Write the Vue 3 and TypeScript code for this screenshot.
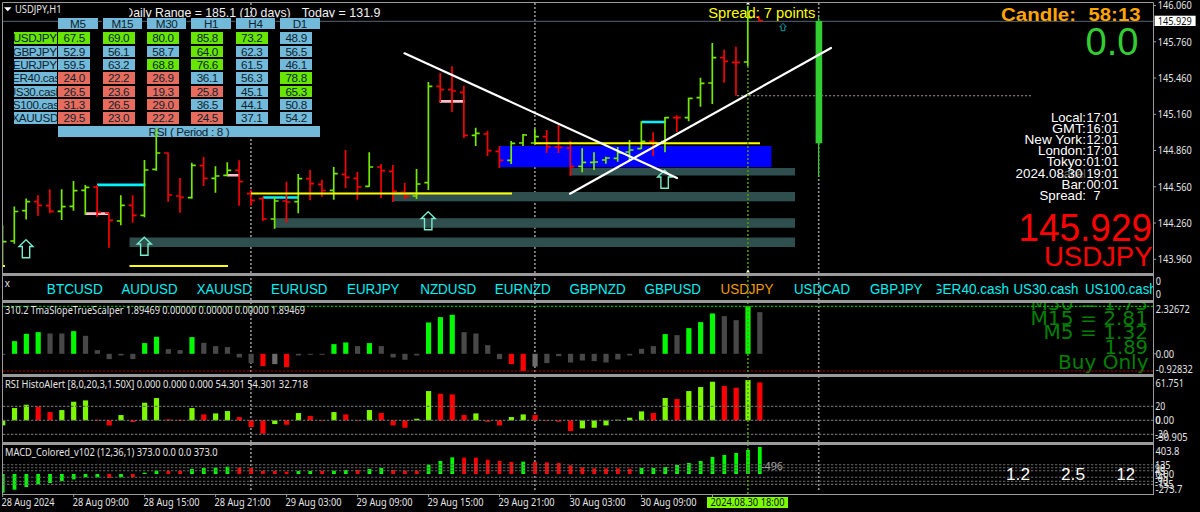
<script setup lang="ts">
type Bar = [open: number, high: number, low: number, close: number, dir: 'u' | 'd']
type Label = [text: string, x: number, baseline: number, width: number]

const slot = (i: number): number => 2.7 + 11.83 * i

const ohlc: Bar[] = [
  [241.7, 225, 266.5, 241.7, 'u'], [241, 206.5, 243.7, 211.5, 'u'], [210.7, 198.5, 219.5, 201.7, 'u'], [201.7, 195.3, 215.7, 205.3, 'd'],
  [205.7, 189.3, 213.3, 211.3, 'd'], [211.3, 189.3, 220, 206.7, 'u'], [206.3, 181, 210.7, 190.7, 'u'], [190.3, 185, 215, 187.3, 'u'],
  [187, 185, 216.7, 212.3, 'd'], [213, 213, 247.7, 220.3, 'd'], [221, 195.3, 225.3, 205.3, 'u'], [205.3, 195.3, 222.7, 215.3, 'd'],
  [215.3, 160, 217.3, 170, 'u'], [169.3, 129, 170.7, 153, 'u'], [153, 152.5, 201.7, 195, 'd'], [196, 178, 212.7, 197.3, 'd'],
  [197.7, 162.7, 198.7, 165.3, 'u'], [165.7, 157, 186, 178.3, 'd'], [178.3, 166.3, 192.7, 176, 'u'], [175.3, 162.3, 176, 170.3, 'u'],
  [170.3, 160.3, 205.7, 181.7, 'd'], [193.7, 189.7, 205.7, 200.3, 'd'], [198.7, 196.7, 221, 219, 'd'], [219, 197.3, 228.7, 201, 'u'],
  [201, 181.7, 222.7, 202, 'd'], [201.7, 174, 213.3, 178.7, 'u'], [178.7, 170, 200.3, 183.7, 'd'], [184.3, 179.7, 196.7, 190.5, 'd'],
  [190.3, 167, 199.7, 173.7, 'u'], [174.3, 150, 188, 177.3, 'd'], [178.3, 172, 199.7, 187, 'd'], [186.3, 152.3, 186.7, 167, 'u'],
  [167, 164, 198, 170.7, 'd'], [171.3, 165, 202, 191.3, 'd'], [192.3, 183, 199, 196.3, 'd'], [196, 169, 199, 184, 'u'],
  [182.7, 82, 190, 86.3, 'u'], [86.3, 73, 102, 89.7, 'd'], [89.7, 66.3, 112, 91, 'd'], [92.3, 85.7, 138, 135.3, 'd'],
  [135.3, 127.7, 146, 133.3, 'u'], [134, 130.7, 156, 150.7, 'd'], [151.3, 146, 168, 160.3, 'd'], [160.3, 141, 164, 143.3, 'u'],
  [143, 134, 146, 135, 'u'], [143, 129, 144, 136.7, 'u'], [136.7, 130, 153, 146.7, 'd'], [147, 124, 153, 147.3, 'd'],
  [148, 140.7, 176, 166.7, 'd'], [166.3, 148.3, 172.3, 162.3, 'u'], [162.3, 152.3, 170, 162, 'u'], [160, 156.7, 163.7, 158, 'u'],
  [158.3, 147, 161.7, 152.7, 'u'], [152, 140, 160, 150, 'u'], [148.7, 121.3, 149, 141.3, 'u'], [141.3, 132.3, 156, 142.3, 'd'],
  [141.7, 117, 152.3, 117.7, 'u'], [117.7, 115.3, 132, 117.7, 'd'], [117.7, 97.7, 121.3, 98.3, 'u'], [97.7, 77.7, 106.7, 83.3, 'u'],
  [83, 43, 104, 57.7, 'u'], [57.7, 49.7, 82.7, 61.3, 'd'], [62.3, 46.7, 95.7, 62.3, 'd'], [62, 6, 66, 17.7, 'u'],
]

const barPath = (b: Bar, i: number): string => {
  const x = slot(i) - 0.2
  const left = i === 0 ? '' : `M${x - 4} ${b[0]}H${x}`
  return `M${x} ${b[1]}V${b[2]}${left}M${x} ${b[3]}H${x + 4}`
}

interface HistoBar { x: number; y: number; w: number; h: number; c: string }
const histogram = (rows: string, zero: number, width: number): HistoBar[] =>
  rows.trim().split(/\s+/).map((item, i) => {
    const c = item.slice(-1)
    const d = Number(item.slice(0, -1)) / 3
    // The first bar is cut by the left frame.
    const x = Math.max(2, slot(i) - width / 2)
    return { x, y: d > 0 ? zero - d : zero, w: slot(i) + width / 2 - x, h: Math.abs(d), c: 'f-' + c }
  })

// Values are thirds of a pixel above (+) or below (-) the zero line.
const slopeBars = histogram(`
  -4s 38g 60g 65g 61s 61s 68g 54s 11s -16s -5s -16s 32g 51g 14s 11s 50g 33s 23s 20s -11s -28s -37r -31m -40r
  -5s -3s -3s 29g 34g 23s 32g 23s -11s -18s -5s 94g 110g 117g 65s 61s 26s -16s -31r -52r -38m -28s -7s -26s -20s
  -22s -26s -17s -5s 15s 23s 59g 56s 77g 95g 121g 113s 101s 143g 125s`, 353.8, 5.2)

const rsiBars = histogram(`
  -15c 37c 47c 41r 25r 31c 56c 60c 2r -15r 16c -5r 53c 67c 3r 2r 37c 18r 21c 28c 10r -20r -40r -11c -13r
  22c 13r -2r 25c 18r -2r 31c 22r -15r -22r 5c 88c 80r 78r 16r 21c -4r -15r 10c 18c 16r -2r -4r -32r -24c
  -22c -15c 2c 8c 27c 22r 67c 64r 88c 100c 116c 103r 98r 121c 114r`, 420.4, 5.2)

const macdBars = histogram(`
  -56g -47g -39g -31g -27g -21g -16g -10g -10g -12r -10g -10r 4g 10g 9r 9r 15g 18g 19g 22g 19r 18r 9r 9r 7r
  9g 9g 9r 10g 12g 12r 15g 18g 12r 10r 10r 28g 39g 50g 49r 49r 43r 39r 36r 37g 36r 35r 33r 26r 20r
  17r 17r 17r 15r 18g 18g 21g 27g 33g 39g 51g 57g 63g 72g 81g`, 474, 3.8)

const separators: number[] = [250.9, 534.9, 818.7]
const arrows: [number, number][] = [[26, 239], [144.3, 236.5], [428.2, 211], [664.6, 169.5]]

const priceAxis: [string, number][] = [
  ['146.060', 5.5], ['145.760', 41.8], ['145.460', 78], ['145.160', 114.3],
  ['144.860', 150.5], ['144.560', 186.8], ['144.260', 223], ['143.960', 259.3],
]

const clocks: Label[] = [
  ['Local:', 1051, 122, 35], ['GMT:', 1052, 133.1, 34], ['New York:', 1024.5, 144.2, 61.5], ['London:', 1038, 155.3, 48],
  ['Tokyo:', 1046.5, 166.4, 39.5], ['2024.08.30', 1015.5, 177.5, 67], ['Bar:', 1061.5, 188.5, 24.5], ['Spread:', 1039.5, 199.6, 46.5],
]
const clockValues: Label[] = [
  ['17:01', 1086.5, 122, 32], ['16:01', 1086.5, 133.1, 32], ['12:01', 1086.5, 144.2, 32], ['17:01', 1086.5, 155.3, 32],
  ['01:01', 1086.5, 166.4, 32], ['19:01', 1086.5, 177.5, 32], ['00:01', 1086.5, 188.5, 32], ['7', 1093.5, 199.6, 7],
]

const symbols: Label[] = [
  ['BTCUSD', 46.8, 293.8, 56], ['AUDUSD', 121.5, 293.8, 56], ['XAUUSD', 196.7, 293.8, 55], ['EURUSD', 271, 293.8, 56.5],
  ['EURJPY', 347, 293.8, 52.5], ['NZDUSD', 420.2, 293.8, 56], ['EURNZD', 494.8, 293.8, 56], ['GBPNZD', 569.6, 293.8, 56],
  ['GBPUSD', 644.6, 293.8, 56.4], ['USDJPY', 720.5, 293.8, 53], ['USDCAD', 794, 293.8, 56], ['GBPJPY', 870, 293.8, 52.5],
  ['US30.cash', 1013.5, 293.8, 65], ['US100.cash', 1085, 293.8, 71.5],
]

const slopeNotes: Label[] = [
  ['M30 = 1.73', 1030.5, 310.2, 117.5], ['M15 = 2.81', 1030.5, 324.8, 117.5], ['M5 = 1.32', 1043.5, 339.3, 104.5],
  ['1.89', 1104.5, 354.2, 43.5], ['Buy Only', 1058, 369, 90.5],
]

const rsiAxis: Label[] = [
  ['61.751', 1155.5, 386.8, 28.5], ['20', 1155.3, 410.4, 10], ['0', 1155.3, 424.2, 5.2], ['0.00', 1155.5, 424.2, 18.5],
  ['-20', 1155, 438.2, 13], ['-30.905', 1155.5, 440.6, 32],
]
const macdLevels: number[] = [464.7, 467.7, 470.8, 477.3, 481.3, 484.4]
const macdAxis: Label[] = [
  ['403.8', 1155.5, 454.8, 24], ['135', 1155, 468.6, 15.5], ['90', 1155, 471.7, 10], ['45', 1155, 474.8, 10], ['0.00', 1155.5, 478.4, 18.5],
  ['-45', 1155, 481, 13], ['-90', 1155, 484.6, 13], ['-135', 1155, 488, 18.5], ['-273.7', 1155.5, 492.8, 27],
]

const times: Label[] = [
  ['28 Aug 2024', 1.5, 506.4, 53], ['28 Aug 09:00', 72.7, 506.4, 56], ['28 Aug 15:00', 143.6, 506.4, 56], ['28 Aug 21:00', 214.6, 506.4, 56],
  ['29 Aug 03:00', 285.6, 506.4, 56], ['29 Aug 09:00', 356.6, 506.4, 56], ['29 Aug 15:00', 427.5, 506.4, 56], ['29 Aug 21:00', 498.5, 506.4, 56],
  ['30 Aug 03:00', 569.5, 506.4, 56], ['30 Aug 09:00', 640.5, 506.4, 56],
]

const frames: string[] = ['M5', 'M15', 'M30', 'H1', 'H4', 'D1']
const rsiTable: { name: string; values: string[] }[] = [
  { name: 'USDJPY', values: ['67.5', '69.0', '80.0', '85.8', '73.2', '48.9'] },
  { name: 'GBPJPY', values: ['52.9', '56.1', '58.7', '64.0', '62.3', '56.5'] },
  { name: 'EURJPY', values: ['59.5', '63.2', '68.8', '76.6', '61.5', '46.1'] },
  { name: 'GER40.cash', values: ['24.0', '22.2', '26.9', '36.1', '56.3', '78.8'] },
  { name: 'US30.cash', values: ['26.5', '23.6', '19.3', '25.8', '45.1', '65.3'] },
  { name: 'US100.cash', values: ['31.3', '26.5', '29.0', '36.5', '44.1', '50.8'] },
  { name: 'XAUUSD', values: ['29.5', '23.0', '22.2', '24.5', '37.1', '54.2'] },
]
const highs = new Set(['67.5', '69.0', '80.0', '85.8', '73.2', '64.0', '68.8', '76.6', '78.8', '65.3'])
const tone = (v: string): string => (highs.has(v) ? 'hi' : Number(v) < 35 ? 'lo' : '')
</script>

<template>
  <div class="terminal">
    <section class="price">
      <div class="rsi-table">
        <div class="row head">
          <span class="gap"></span>
          <span v-for="f in frames" :key="f" class="slot"><b class="cell wide">{{ f }}</b></span>
        </div>
        <div v-for="(r, k) in rsiTable" :key="r.name" class="row">
          <span class="name" :class="{ hi: k === 0 }"><i>{{ r.name }}</i></span>
          <span v-for="(v, j) in r.values" :key="j" class="slot"><b class="cell" :class="tone(v)">{{ v }}</b></span>
        </div>
        <div class="row foot"><b class="cell">RSI ( Period : 8 )</b></div>
      </div>
      <svg class="chart" width="1200" height="274" viewBox="0 0 1200 274">
        <defs>
          <clipPath id="range-clip"><rect x="129.3" y="0" width="300" height="17.6" /></clipPath>
          <clipPath id="price-clip"><rect x="2" y="0" width="1152" height="274" /></clipPath>
        </defs>
        <line class="vsep" x1="250.9" x2="250.9" y1="139" y2="274" />
        <line class="vsep" x1="250.9" x2="250.9" y1="3" y2="17" />
        <line class="vsep" x1="534.9" x2="534.9" y1="3" y2="274" />
        <line class="vsep" x1="818.7" x2="818.7" y1="3" y2="274" />
        <path class="bid" d="M2 21.3H58M97.5 21.3h4.5M142 21.3h5M186.5 21.3h4.5M231 21.3h4.5M275.5 21.3h4.5M320 21.3H1153" />

        <g class="zone">
          <rect x="129.5" y="237.5" width="665.5" height="9.5" />
          <rect x="274" y="218.2" width="521" height="9.6" />
          <rect x="392.5" y="192" width="402.5" height="9.3" />
          <rect x="570.5" y="168" width="224.5" height="7.5" />
        </g>
        <rect x="499" y="146" width="272.4" height="21.2" fill="#0000ff" />

        <path class="cyan" d="M97 184.9h48.5M263 197.5h36M641.5 122h24.5" />
        <path class="pink" d="M85 213.6h24M227 175.3h12.5M439.5 101.4h25" />
        <g clip-path="url(#price-clip)">
          <path v-for="(b, i) in ohlc" :key="i" class="bar" :class="b[4]" :d="barPath(b, i)" />
        </g>
        <path class="bar d" d="M756 17.3h3v3.2h4" />
        <path class="yellow" d="M2 266h3M129.5 266h98.5M251 193.5h261M535 143.2h225" />

        <line class="entry" x1="737" x2="1031" y1="95.7" y2="95.7" />
        <rect x="815.6" y="21" width="6.6" height="122.3" fill="#32cd32" />
        <path d="M818.6 17v160" stroke="#32cd32" stroke-width="1.2" />
        <g class="arrow">
          <path v-for="(a, i) in arrows" :key="i" :transform="`translate(${a[0]} ${a[1]})`" d="M0 .7L7 7.5H3.7V18.7H-3.7V7.5H-7Z" />
        </g>
        <path class="trend" d="M404.5 53.3L677 178M570 193.7L831 48" />
        <path transform="translate(783 23)" d="M0 .3L3.2 3.7H1.8V7.7H-1.8V3.7H-3.2Z" stroke="#00a0a8" fill="none" />
        <line class="now" x1="747.9" x2="747.9" y1="66" y2="274" />
        <path d="M746 4.5h4l-2-3zM746 272.5h4l-2-3z" fill="#efffd8" />

        <g clip-path="url(#range-clip)">
          <text class="range" x="124.3" y="17.3" textLength="166.4" lengthAdjust="spacingAndGlyphs">Daily Range = 185.1 (10 days)</text>
          <text class="range" x="301.8" y="17.3" textLength="78.7" lengthAdjust="spacingAndGlyphs">Today = 131.9</text>
        </g>
        <path d="M4 7.3h7.5L7.75 11.2z" fill="#fff" />
        <text class="sm" x="15" y="12.9" textLength="46.5" lengthAdjust="spacingAndGlyphs">USDJPY,H1</text>
        <text class="spread" x="708.3" y="17.7" textLength="107" lengthAdjust="spacingAndGlyphs">Spread: 7 points</text>

        <text class="candle" x="1001" y="20.5" textLength="75" lengthAdjust="spacingAndGlyphs">Candle:</text>
        <text class="candle" x="1088.5" y="20.5" textLength="52" lengthAdjust="spacingAndGlyphs">58:13</text>
        <text class="zero" x="1085.5" y="55" textLength="53" lengthAdjust="spacingAndGlyphs">0.0</text>
        <text x="1057" y="177.5" font-size="13" fill="#606060" textLength="29">Label</text>
        <text v-for="t in clocks" :key="t[0]" class="clock" :x="t[1]" :y="t[2]" :textLength="t[3]" lengthAdjust="spacingAndGlyphs">{{ t[0] }}</text>
        <text v-for="t in clockValues" :key="t[2]" class="clock" :x="t[1]" :y="t[2]" :textLength="t[3]" lengthAdjust="spacingAndGlyphs">{{ t[0] }}</text>
        <text class="quote" x="1018.5" y="241.2" textLength="133.5" lengthAdjust="spacingAndGlyphs">145.929</text>
        <text class="pair" x="1044" y="266" textLength="108.5" lengthAdjust="spacingAndGlyphs">USDJPY</text>

        <path class="frame" d="M2.5 274V2.5H1153.5V274M2 273.5H1154" />
        <path v-for="a in priceAxis" :key="a[0]" class="frame" :d="`M1154 ${a[1]}h2`" />
        <text v-for="a in priceAxis" :key="a[0]" class="sm" x="1157.8" :y="a[1] + 3.7" textLength="34" lengthAdjust="spacingAndGlyphs">{{ a[0] }}</text>
        <rect x="1154.6" y="15.7" width="41" height="10.3" fill="#fff" />
        <text class="sm dark" x="1157.8" y="24.8" textLength="34" lengthAdjust="spacingAndGlyphs">145.929</text>
      </svg>
    </section>

    <svg width="1200" height="28" viewBox="0 274 1200 28">
      <defs>
        <clipPath id="ger-clip"><rect x="936.5" y="275" width="100" height="26" /></clipPath>
        <clipPath id="row-clip"><rect x="2" y="275" width="1151" height="26" /></clipPath>
      </defs>
      <line v-for="x in separators" :key="x" class="vsep" :x1="x" :x2="x" y1="274" y2="302" />
      <text class="sm" x="4.8" y="287" textLength="5.2" lengthAdjust="spacingAndGlyphs">x</text>
      <g clip-path="url(#row-clip)">
        <text v-for="t in symbols" :key="t[0]" class="symbol" :class="{ active: t[0] === 'USDJPY' }" :x="t[1]" :y="t[2]" :textLength="t[3]" lengthAdjust="spacingAndGlyphs">{{ t[0] }}</text>
        <text class="symbol" clip-path="url(#ger-clip)" x="932" y="293.8" textLength="77" lengthAdjust="spacingAndGlyphs">GER40.cash</text>
      </g>
      <line class="now" x1="747.9" x2="747.9" y1="276" y2="302" />
      <path class="frame" d="M2.5 275V302M1153.5 275V302M2 274.5H1154M2 275.5H1154M2 300.5H1154M2 301.5H1154" />
      <text class="sm" x="1155.8" y="285" textLength="5.2" lengthAdjust="spacingAndGlyphs">0</text>
      <text class="sm" x="1155.8" y="298.4" textLength="5.2" lengthAdjust="spacingAndGlyphs">0</text>
    </svg>

    <svg width="1200" height="74" viewBox="0 302 1200 74">
      <line v-for="x in separators" :key="x" class="vsep" :x1="x" :x2="x" y1="302" y2="376" />
      <rect v-for="(b, i) in slopeBars" :key="i" :x="b.x" :y="b.y" :width="b.w" :height="b.h" :class="b.c" />
      <text v-for="t in slopeNotes" :key="t[0]" class="note" :x="t[1]" :y="t[2]" :textLength="t[3]" lengthAdjust="spacingAndGlyphs">{{ t[0] }}</text>
      <path class="level" stroke="#00b400" d="M3 306.4H1153" />
      <path class="level" stroke="#a80000" d="M3 371H1153" />
      <line class="now" x1="747.9" x2="747.9" y1="302" y2="376" />
      <text class="sm" x="5" y="313.9" textLength="300" lengthAdjust="spacingAndGlyphs">310.2 TmaSlopeTrueScalper 1.89469 0.00000 0.00000 0.00000 1.89469</text>
      <path class="frame" d="M2.5 302V376M1153.5 302V376M2 302.5H1154M2 374.5H1154M2 375.5H1154M1154 353.8h2" />
      <text class="sm" x="1155.7" y="312.6" textLength="34" lengthAdjust="spacingAndGlyphs">2.32672</text>
      <text class="sm" x="1155.7" y="357.8" textLength="18.5" lengthAdjust="spacingAndGlyphs">0.00</text>
      <text class="sm" x="1155.7" y="372.5" textLength="37" lengthAdjust="spacingAndGlyphs">-0.92832</text>
    </svg>

    <svg width="1200" height="68" viewBox="0 376 1200 68">
      <line v-for="x in separators" :key="x" class="vsep" :x1="x" :x2="x" y1="376" y2="444" />
      <rect v-for="(b, i) in rsiBars" :key="i" :x="b.x" :y="b.y" :width="b.w" :height="b.h" :class="b.c" />
      <path class="level grey" d="M3 406.4H1153M3 420.4H1153M3 434.4H1153" />
      <line class="now" x1="747.9" x2="747.9" y1="376" y2="444" />
      <text class="sm" x="5" y="388" textLength="303" lengthAdjust="spacingAndGlyphs">RSI HistoAlert [8,0,20,3,1.50X] 0.000 0.000 0.000 54.301 54.301 32.718</text>
      <path class="frame" d="M2.5 376V444M1153.5 376V444M2 376.5H1154M2 442.5H1154M2 443.5H1154" />
      <text v-for="(t, i) in rsiAxis" :key="i" class="sm" :x="t[1]" :y="t[2]" :textLength="t[3]" lengthAdjust="spacingAndGlyphs">{{ t[0] }}</text>
    </svg>

    <svg width="1200" height="51" viewBox="0 444 1200 51">
      <line v-for="x in separators" :key="x" class="vsep" :x1="x" :x2="x" y1="444" y2="492" />
      <rect v-for="(b, i) in macdBars" :key="i" :x="b.x" :y="b.y" :width="b.w" :height="b.h" :class="b.c" />
      <path v-for="y in macdLevels" :key="y" class="level grey" :d="`M3 ${y}H1153`" />
      <line class="now" x1="747.9" x2="747.9" y1="444" y2="494" />
      <text class="sm" x="5" y="456.1" textLength="212.5" lengthAdjust="spacingAndGlyphs">MACD_Colored_v102 (12,36,1) 373.0 0.0 0.0 373.0</text>
      <text class="sm ghost" x="761" y="469.7" textLength="22" lengthAdjust="spacingAndGlyphs">-496</text>
      <text class="big" x="1006" y="479.9" textLength="24" lengthAdjust="spacingAndGlyphs">1.2</text>
      <text class="big" x="1061" y="479.9" textLength="24" lengthAdjust="spacingAndGlyphs">2.5</text>
      <text class="big" x="1116.5" y="479.9" textLength="18.5" lengthAdjust="spacingAndGlyphs">12</text>
      <path class="frame" d="M2.5 444V494M1153.5 444V494M2 444.5H1154M2 494.5H1154" />
      <text v-for="(t, i) in macdAxis" :key="i" class="sm" :x="t[1]" :y="t[2]" :textLength="t[3]" lengthAdjust="spacingAndGlyphs">{{ t[0] }}</text>
    </svg>

    <svg width="1200" height="17" viewBox="0 495 1200 17">
      <path v-for="k in 11" :key="k" class="frame" :d="`M${slot((k - 1) * 6)} 495v2`" />
      <text v-for="t in times" :key="t[1]" class="sm" :x="t[1]" :y="t[2]" :textLength="t[3]" lengthAdjust="spacingAndGlyphs">{{ t[0] }}</text>
      <rect x="707" y="497" width="81" height="11" fill="#7cfc00" />
      <text class="sm dark" x="710.5" y="506.4" textLength="74" lengthAdjust="spacingAndGlyphs">2024.08.30 18:00</text>
    </svg>
  </div>
</template>

<style>
body {
  background: #000;
}
</style>

<style scoped>
.terminal {
  width: 1200px;
  height: 512px;
  display: flex;
  flex-direction: column;
  background: #000;
  overflow: hidden;
  font-family: "Liberation Sans", Arial, sans-serif;
}
svg {
  display: block;
  flex: none;
}
.price {
  display: grid;
  height: 274px;
}
.price > * {
  grid-area: 1 / 1;
}
.rsi-table {
  padding: 18px 0 0 14px;
  font-size: 11.7px;
  letter-spacing: -0.35px;
  line-height: 11.6px;
  color: #0d2430;
}
.row {
  display: flex;
  height: 11.2px;
  margin-bottom: 2.15px;
}
.row.head {
  margin-bottom: 3.2px;
}
.gap,
.name {
  flex: none;
  width: 43.4px;
  margin-right: 0.8px;
}
.name {
  display: flex;
  justify-content: center;
  overflow: hidden;
  background: #73b9d9;
}
.name i {
  flex: none;
  font-style: normal;
  margin-right: 2px;
}
.slot {
  flex: none;
  width: 44.4px;
}
.cell {
  display: block;
  width: 32px;
  height: 11.2px;
  font-weight: normal;
  text-align: center;
  background: #73b9d9;
}
.cell.wide {
  width: 39.4px;
}
.cell.hi,
.name.hi {
  background: #66e600;
}
.cell.lo {
  background: #e86c5d;
}
.foot {
  padding-left: 44.2px;
}
.foot .cell {
  width: 261.5px;
  letter-spacing: -0.35px;
}
.vsep {
  stroke: #929292;
  stroke-width: 1.6;
  stroke-dasharray: 2 2;
}
.now {
  stroke: #5a9c00;
  stroke-width: 1.5;
  stroke-dasharray: 2 2;
}
.bid {
  stroke: #46515c;
  stroke-width: 1.3;
}
.zone {
  fill: #2f4f4f;
}
.cyan,
.pink,
.yellow,
.bar,
.trend,
.arrow,
.frame,
.level {
  fill: none;
}
.cyan {
  stroke: #00f4ff;
  stroke-width: 2.6;
}
.pink {
  stroke: #ffc0cb;
  stroke-width: 2.6;
}
.yellow {
  stroke: #ffff00;
  stroke-width: 2;
}
.bar {
  stroke-width: 1.7;
}
.bar.u {
  stroke: #74ea00;
}
.bar.d {
  stroke: #f60000;
}
.trend {
  stroke: #fff;
  stroke-width: 2.2;
  stroke-linecap: round;
}
.entry {
  stroke: #a08c94;
  stroke-width: 1.1;
  stroke-dasharray: 2.2 1.8;
}
.arrow {
  stroke: #78eccb;
  stroke-width: 1.4;
}
.frame {
  stroke: #9a9a9a;
}
.level {
  stroke-width: 1.1;
  stroke-dasharray: 2.4 1.6;
}
.grey {
  stroke: #686868;
}
.f-g {
  fill: #00f800;
}
.f-c {
  fill: #7cf800;
}
.f-r {
  fill: #fa0000;
}
.f-s {
  fill: #484848;
}
.f-m {
  fill: #6c6c6c;
}
.sm {
  font-family: "Noto Sans", "Open Sans", sans-serif;
  font-size: 10.1px;
  fill: #e4e4e4;
}
.sm.dark {
  fill: #101010;
}
.sm.ghost {
  fill: #a0a0a0;
}
.range {
  font-size: 13.2px;
  fill: #f0f0f0;
}
.spread {
  font-size: 15.2px;
  fill: #ffff00;
}
.candle {
  font-size: 18.5px;
  font-weight: bold;
  fill: #ffa500;
}
.zero {
  font-size: 38px;
  fill: #32cd32;
}
.clock {
  font-size: 13.2px;
  fill: #fff;
}
.quote {
  font-size: 38px;
  fill: #ff0000;
}
.pair {
  font-size: 28.5px;
  fill: #ff0000;
}
.symbol {
  font-size: 14px;
  fill: #00f0f4;
}
.symbol.active {
  fill: #f09c00;
}
.note {
  font-family: "DejaVu Sans", Verdana, sans-serif;
  font-size: 20px;
  fill: #008000;
}
.big {
  font-size: 17px;
  fill: #fff;
}
</style>
